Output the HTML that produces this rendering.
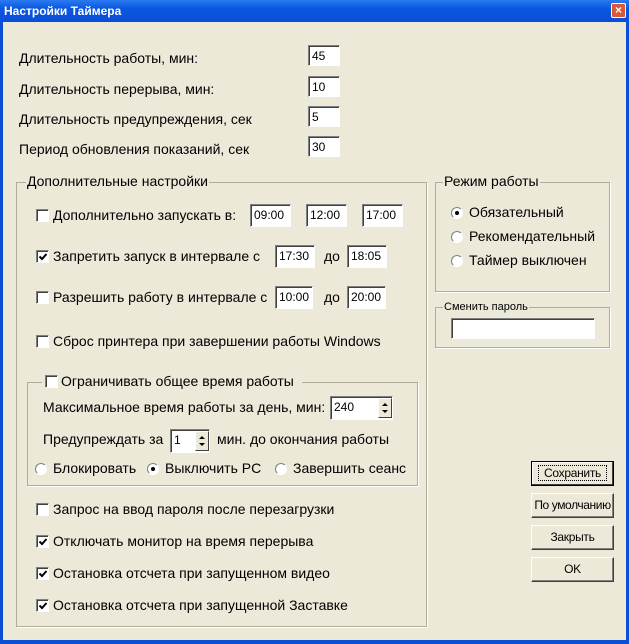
<!DOCTYPE html>
<html><head><meta charset="utf-8"><style>
*{margin:0;padding:0;box-sizing:border-box}
body{width:629px;height:644px;overflow:hidden;background:#0a4fd6;font-family:"Liberation Sans","DejaVu Sans",sans-serif;font-size:14px;color:#000;position:relative}
.title{position:absolute;left:0;top:0;width:629px;height:22px;background:linear-gradient(#2a7bf0,#0a56e0 40%,#0a4ed8);}
.title span{position:absolute;left:4px;top:4px;color:#fff;font-weight:bold;font-size:12px}
.close{position:absolute;left:611px;top:3px;width:15px;height:15px;background:#d9583a;border:1px solid #fff;border-radius:2px;color:#fff;font-size:12px;line-height:12px;text-align:center;font-weight:bold}
.client{position:absolute;left:3px;top:22px;width:623px;height:618px;background:#ece9d8}
.a{position:absolute;white-space:nowrap}
.in{position:absolute;background:#fff;border:1px solid;border-color:#808080 #fff #fff #808080;box-shadow:inset 1px 1px 0 #404040;padding:2px 0 0 3px;font-size:12px;line-height:16px}
.cb{position:absolute;width:13px;height:13px;background:#fff;border:1px solid;border-color:#808080 #fff #fff #808080;box-shadow:inset 1px 1px 0 #404040}
.cb svg{position:absolute;left:1px;top:1px}
.rb{position:absolute;width:12px;height:12px;border-radius:50%;background:#fff;border:1px solid;border-color:#808080 #fff #fff #808080}
.rb.on::after{content:"";position:absolute;left:3px;top:3px;width:4px;height:4px;border-radius:50%;background:#000}
.grp{position:absolute;border:1px solid #b0ad9c;box-shadow:1px 1px 0 #fff}
.lg{position:absolute;background:#ece9d8;white-space:nowrap;padding:0 1px}
.btn{position:absolute;width:83px;height:25px;background:#ece9d8;border:1px solid;border-color:#fff #404040 #404040 #fff;box-shadow:inset -1px -1px 0 #808080;text-align:center;line-height:22px;font-size:12px;white-space:nowrap;letter-spacing:-0.3px}
.spin{position:absolute;width:14px;border:1px solid;border-color:#fff #404040 #404040 #fff;background:#ece9d8}
</style></head><body>
<div class="title"><span>Настройки Таймера</span><div class="close">×</div></div>
<div class="client">
<div style="position:absolute;left:-3px;top:-22px">
<div class="a" style="left:19px;top:50px">Длительность работы, мин:</div>
<div class="a" style="left:19px;top:81px">Длительность перерыва, мин:</div>
<div class="a" style="left:19px;top:111px">Длительность предупреждения, сек</div>
<div class="a" style="left:19px;top:141px">Период обновления показаний, сек</div>
<div class="in" style="left:308px;top:45px;width:32px;height:21px">45</div>
<div class="in" style="left:308px;top:76px;width:32px;height:21px">10</div>
<div class="in" style="left:308px;top:106px;width:32px;height:21px">5</div>
<div class="in" style="left:308px;top:136px;width:32px;height:21px">30</div>

<div class="grp" style="left:16px;top:182px;width:411px;height:445px"></div>
<div class="lg" style="left:26px;top:173px">Дополнительные настройки</div>
<div class="cb" style="left:36px;top:209px"></div><div class="a" style="left:53px;top:207px">Дополнительно запускать в:</div>
<div class="in" style="left:250px;top:204px;width:41px;height:23px">09:00</div>
<div class="in" style="left:306px;top:204px;width:41px;height:23px">12:00</div>
<div class="in" style="left:362px;top:204px;width:41px;height:23px">17:00</div>
<div class="cb" style="left:36px;top:250px"><svg width="10" height="10"><path d="M1.5 4.5l2.5 2.5 4.5-5" stroke="#000" stroke-width="2" fill="none"/></svg></div><div class="a" style="left:53px;top:248px">Запретить запуск в интервале с</div>
<div class="in" style="left:275px;top:245px;width:40px;height:23px">17:30</div><div class="a" style="left:324px;top:248px">до</div>
<div class="in" style="left:347px;top:245px;width:40px;height:23px">18:05</div>
<div class="cb" style="left:36px;top:291px"></div><div class="a" style="left:53px;top:289px">Разрешить работу в интервале с</div>
<div class="in" style="left:275px;top:286px;width:38px;height:23px">10:00</div><div class="a" style="left:324px;top:289px">до</div>
<div class="in" style="left:347px;top:286px;width:39px;height:23px">20:00</div>
<div class="cb" style="left:36px;top:335px"></div><div class="a" style="left:53px;top:333px">Сброс принтера при завершении работы Windows</div>

<div class="grp" style="left:27px;top:382px;width:391px;height:104px"></div>
<div class="lg" style="left:42px;top:373px;padding-right:8px"><span class="cb" style="position:relative;display:inline-block;left:2px;top:2px;margin-right:5px"></span>Ограничивать общее время работы</div>
<div class="a" style="left:43px;top:399px">Максимальное время работы за день, мин:</div>
<div class="in" style="left:330px;top:396px;width:63px;height:24px">240</div>
<div class="spin" style="left:378px;top:398px;height:20px"><svg width="12" height="18"><path d="M3 7l3-3 3 3z M3 11l3 3 3-3z" fill="#000"/></svg></div>
<div class="a" style="left:43px;top:431px">Предупреждать за</div>
<div class="in" style="left:170px;top:429px;width:40px;height:24px">1</div>
<div class="spin" style="left:195px;top:431px;height:20px"><svg width="12" height="18"><path d="M3 7l3-3 3 3z M3 11l3 3 3-3z" fill="#000"/></svg></div>
<div class="a" style="left:217px;top:431px">мин. до окончания работы</div>
<div class="rb" style="left:35px;top:463px"></div><div class="a" style="left:53px;top:460px">Блокировать</div>
<div class="rb on" style="left:147px;top:463px"></div><div class="a" style="left:165px;top:460px">Выключить PC</div>
<div class="rb" style="left:275px;top:463px"></div><div class="a" style="left:293px;top:460px">Завершить сеанс</div>

<div class="cb" style="left:36px;top:503px"></div><div class="a" style="left:53px;top:501px">Запрос на ввод пароля после перезагрузки</div>
<div class="cb" style="left:36px;top:535px"><svg width="10" height="10"><path d="M1.5 4.5l2.5 2.5 4.5-5" stroke="#000" stroke-width="2" fill="none"/></svg></div><div class="a" style="left:53px;top:533px">Отключать монитор на время перерыва</div>
<div class="cb" style="left:36px;top:567px"><svg width="10" height="10"><path d="M1.5 4.5l2.5 2.5 4.5-5" stroke="#000" stroke-width="2" fill="none"/></svg></div><div class="a" style="left:53px;top:565px">Остановка отсчета при запущенном видео</div>
<div class="cb" style="left:36px;top:599px"><svg width="10" height="10"><path d="M1.5 4.5l2.5 2.5 4.5-5" stroke="#000" stroke-width="2" fill="none"/></svg></div><div class="a" style="left:53px;top:597px">Остановка отсчета при запущенной Заставке</div>

<div class="grp" style="left:435px;top:182px;width:175px;height:110px"></div>
<div class="lg" style="left:443px;top:173px">Режим работы</div>
<div class="rb on" style="left:451px;top:207px"></div><div class="a" style="left:469px;top:204px">Обязательный</div>
<div class="rb" style="left:451px;top:231px"></div><div class="a" style="left:469px;top:228px">Рекомендательный</div>
<div class="rb" style="left:451px;top:255px"></div><div class="a" style="left:469px;top:252px">Таймер выключен</div>

<div class="grp" style="left:435px;top:307px;width:175px;height:41px"></div>
<div class="lg" style="left:443px;top:301px;font-size:11px">Сменить пароль</div>
<div class="in" style="left:451px;top:318px;width:144px;height:21px"></div>

<div class="btn" style="left:531px;top:461px;border:1px solid #000;box-shadow:inset -1px -1px 0 #404040,inset 1px 1px 0 #fff"><span style="border:1px dotted #000;padding:0 5px">Сохранить</span></div>
<div class="btn" style="left:531px;top:493px;font-size:12px;letter-spacing:-0.4px">По умолчанию</div>
<div class="btn" style="left:531px;top:525px">Закрыть</div>
<div class="btn" style="left:531px;top:557px">OK</div>
</div></div>
</body></html>
